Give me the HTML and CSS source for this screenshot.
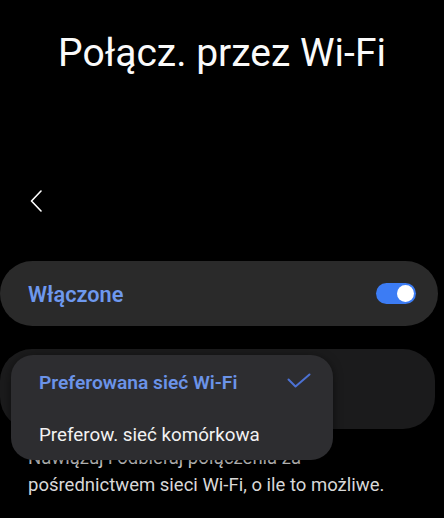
FILE: index.html
```html
<!DOCTYPE html>
<html lang="pl">
<head>
<meta charset="utf-8">
<title>Połącz. przez Wi-Fi</title>
<link rel="stylesheet" href="styles.css">
</head>
<body>
<h1 class="title">Połącz. przez Wi-Fi</h1>
<div class="nav">
  <svg class="back" width="12" height="22" viewBox="0 0 12 22"><path d="M11 1 L1.5 11 L11 21" fill="none" stroke="#fff" stroke-width="1.6" stroke-linecap="round" stroke-linejoin="round"/></svg>
</div>
<div class="card card-main">
  <span class="main-label">Włączone</span>
  <span class="toggle"><span class="thumb"></span></span>
</div>
<div class="pref">
  <div class="card card-pref"></div>
  <div class="popup">
    <div class="item item-active">
      <span>Preferowana sieć Wi-Fi</span>
      <svg class="check" width="24" height="15" viewBox="0 0 24 15"><path d="M1.5 6.5 L8.5 13.5 L22.5 1.5" fill="none" stroke="#4c71d3" stroke-width="2" stroke-linecap="round" stroke-linejoin="round"/></svg>
    </div>
    <div class="item">Preferow. sieć komórkowa</div>
  </div>
</div>
<p class="desc">Nawiązuj i odbieraj połączenia za<br>pośrednictwem sieci Wi-Fi, o ile to możliwe.</p>
</body>
</html>
```
FILE: styles.css
```css
html, body {
  margin: 0;
  padding: 0;
  background: #000;
}
body {
  font-family: Roboto, "Noto Sans", "Liberation Sans", sans-serif;
  color: #fff;
  width: 444px;
  height: 518px;
  overflow: hidden;
}
.title {
  margin: 0;
  padding-top: 29px;
  font-size: 39px;
  line-height: 48px;
  font-weight: 400;
  text-align: center;
  color: #fafafa;
}
.nav {
  padding-top: 113px;
  padding-left: 30px;
  height: 22px;
}
.back {
  display: block;
}
.card {
  border-radius: 33px;
}
.card-main {
  margin-top: 49px;
  width: 438px;
  height: 65px;
  box-sizing: border-box;
  background: #2a2a2a;
  display: flex;
  align-items: center;
  justify-content: space-between;
  padding: 0 22px 0 28px;
}
.main-label {
  font-size: 21.7px;
  font-weight: 600;
  color: #6e98ee;
  padding-top: 1px;
}
.toggle {
  position: relative;
  width: 40px;
  height: 21px;
  border-radius: 11px;
  background: #3c7cf4;
}
.thumb {
  position: absolute;
  right: 2px;
  top: 2px;
  width: 17px;
  height: 17px;
  border-radius: 50%;
  background: #fff;
}
.pref {
  position: relative;
  margin-top: 23px;
}
.card-pref {
  width: 435px;
  height: 80px;
  background: #1b1b1c;
  border-radius: 32px;
}
.popup {
  position: absolute;
  left: 11px;
  top: 6px;
  width: 322px;
  height: 105px;
  box-sizing: border-box;
  padding-top: 1px;
  border-radius: 22px;
  background: #2d2d30;
  box-shadow: 0 2px 10px rgba(0,0,0,0.5);
  z-index: 2;
}
.item {
  display: flex;
  align-items: center;
  justify-content: space-between;
  height: 53px;
  line-height: 53px;
  padding: 0 22px 0 28px;
  font-size: 18.8px;
  color: #f2f2f2;
}
.item-active {
  color: #6b93e8;
  font-weight: 600;
  font-size: 19.2px;
}
.check {
  display: block;
  margin-top: -4px;
}
.desc {
  margin: 16px 0 0;
  padding: 0 28px;
  font-size: 18.5px;
  line-height: 27px;
  color: #d8d8d8;
}
```
